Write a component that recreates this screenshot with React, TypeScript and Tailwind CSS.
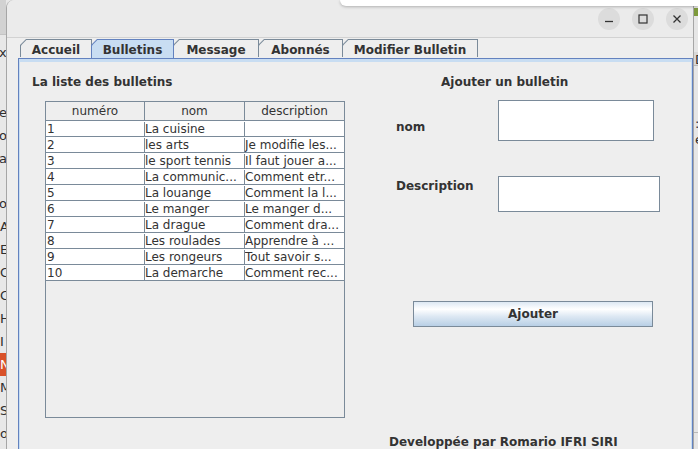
import clsx from "clsx";

const rows = [
  ["1", "La cuisine", ""],
  ["2", "les arts", "Je modifie les..."],
  ["3", "le sport tennis", "Il faut jouer a..."],
  ["4", "La communic...", "Comment etr..."],
  ["5", "La louange", "Comment la l..."],
  ["6", "Le manger", "Le manger d..."],
  ["7", "La drague", "Comment dra..."],
  ["8", "Les roulades", "Apprendre à ..."],
  ["9", "Les rongeurs", "Tout savoir s..."],
  ["10", "La demarche", "Comment rec..."],
];

const tabs = [
  { label: "Accueil", width: "w-[72px]" },
  { label: "Bulletins", width: "w-[83px]", selected: true },
  { label: "Message", width: "w-[86px]" },
  { label: "Abonnés", width: "w-[85px]" },
  { label: "Modifier Bulletin", width: "w-[136px]" },
];

const sideLetters = ["A", "E", "C", "C", "H", "I", "N", "M", "S", "o"];

const Tab = ({ label, width, selected }: { label: string; width: string; selected?: boolean }) => {
  return (
    <div
      className={clsx(
        width,
        "-ml-px first:ml-0 px-px pt-px [clip-path:polygon(6px_0,100%_0,100%_100%,0_100%,0_6px)]",
        selected ? "relative z-10 h-[19px] bg-[#6382bf]" : "h-[18px] bg-[#7a8a99]"
      )}
    >
      <div
        className={clsx(
          "flex h-[17px] items-center justify-center pt-[2px] text-[12px] font-bold text-[#333333] [clip-path:polygon(5.4px_0,100%_0,100%_100%,0_100%,0_5.4px)]",
          selected ? "h-[18px] bg-[#c8ddf2]" : "bg-[#eeeeee]"
        )}
      >
        {label}
      </div>
    </div>
  );
};

const App = () => {
  return (
    <div className="relative flex h-[449px] w-[698px] overflow-hidden bg-[#e8e8e8] font-['DejaVu_Sans',sans-serif] text-[#333333]">
      {/* desktop behind, left */}
      <div className="flex w-[6px] shrink-0 flex-col overflow-hidden text-[13px] leading-[23px] text-[#2e2e2e]">
        <div className="h-[35px] shrink-0 border-b border-[#c4c4c4] bg-[#d2d2d2]" />
        <div className="mt-[6px] -ml-[1px]">x</div>
        <div className="mt-[37px] -ml-[1px]">e</div>
        <div className="-ml-[1px]">o</div>
        <div className="-ml-[1px]">av</div>
        <div className="mt-[22px] -ml-[1px]">o</div>
        {sideLetters.map((l, i) => (
          <div key={i} className={clsx("-ml-[1px] pl-px", l === "N" && "bg-[#d9522a] text-white")}>
            {l}
          </div>
        ))}
      </div>

      {/* window */}
      <div className="flex w-[688px] shrink-0 flex-col rounded-tl-[8px] border-x border-[#a6a6a6] bg-[#eeeeee]">
        <div className="flex h-[38px] shrink-0 items-center justify-end gap-[12px] rounded-tl-[8px] border-b border-[#d2d2d2] bg-[#ebebeb] pr-[5px]">
          <div className="flex h-[22px] w-[22px] items-center justify-center rounded-full bg-[#dcdcdc]">
            <svg width="10" height="10" viewBox="0 0 10 10">
              <path d="M1 7.5h8" stroke="#333" strokeWidth="1.3" />
            </svg>
          </div>
          <div className="flex h-[22px] w-[22px] items-center justify-center rounded-full bg-[#dcdcdc]">
            <svg width="10" height="10" viewBox="0 0 10 10">
              <rect x="1" y="1" width="8" height="8" fill="none" stroke="#333" strokeWidth="1.2" />
            </svg>
          </div>
          <div className="flex h-[22px] w-[22px] items-center justify-center rounded-full bg-[#dcdcdc]">
            <svg width="10" height="10" viewBox="0 0 10 10">
              <path d="M1.5 1.5l7 7M8.5 1.5l-7 7" stroke="#333" strokeWidth="1.3" />
            </svg>
          </div>
        </div>

        <div className="flex flex-1 flex-col pl-[11px] pt-[1px]">
          <div className="ml-[2px] flex items-start">
            {tabs.map((t) => (
              <Tab key={t.label} {...t} />
            ))}
          </div>

          <div className="flex-1 border-x border-t border-[#6382bf] bg-[#eeeeee]">
            <div className="flex h-full border-x border-t-[3px] border-[#c8ddf2]">
              {/* liste */}
              <div className="flex w-[340px] shrink-0 flex-col pl-[12px] pt-[12px]">
                <p className="text-[12px] font-bold leading-[16px]">La liste des bulletins</p>
                <div className="ml-[13px] mt-[11px] flex h-[317px] w-[300px] flex-col border border-[#7a8a99] bg-[#eeeeee] text-[12px]">
                  <div className="flex h-[19px] shrink-0 border-b border-[#7a8a99] bg-[#eeeeee] leading-[18px]">
                    <div className="w-[99px] border-r border-[#7a8a99] text-center">numéro</div>
                    <div className="w-[100px] border-r border-[#7a8a99] text-center">nom</div>
                    <div className="flex-1 text-center">description</div>
                  </div>
                  {rows.map((r) => (
                    <div key={r[0]} className="flex h-[16px] shrink-0 border-b border-[#7a8a99] bg-white pt-px leading-[15px]">
                      <div className="w-[99px] overflow-hidden whitespace-nowrap border-r border-[#7a8a99] pl-px">{r[0]}</div>
                      <div className="w-[100px] overflow-hidden whitespace-nowrap border-r border-[#7a8a99]">{r[1]}</div>
                      <div className="flex-1 overflow-hidden whitespace-nowrap">{r[2]}</div>
                    </div>
                  ))}
                </div>
              </div>

              {/* ajout */}
              <div className="flex flex-1 flex-col pt-[12px] text-[12px] font-bold">
                <p className="ml-[81px] leading-[16px]">Ajouter un bulletin</p>
                <div className="mt-[10px] flex items-start">
                  <span className="ml-[36px] mt-[19px] w-[102px] leading-[16px]">nom</span>
                  <div className="h-[41px] w-[156px] border border-[#7a8a99] bg-white" />
                </div>
                <div className="mt-[35px] flex items-start">
                  <span className="ml-[36px] mt-[2px] w-[102px] leading-[16px]">Description</span>
                  <div className="h-[36px] w-[162px] border border-[#7a8a99] bg-white" />
                </div>
                <button className="ml-[53px] mt-[89px] flex h-[26px] w-[240px] items-center justify-center border border-[#7a8a99] bg-[linear-gradient(to_bottom,#dde8f3_0%,#ffffff_30%,#dde8f3_60%,#b8cfe5_100%)] font-bold text-[#333333]">
                  Ajouter
                </button>
                <p className="ml-[29px] mt-[107px] leading-[16px]">Developpée par Romario IFRI SIRI</p>
              </div>
            </div>
          </div>
        </div>
      </div>

      {/* desktop behind, right */}
      <div className="flex w-[4px] shrink-0 flex-col overflow-hidden bg-[#e6e6e6] text-[13px] leading-[16px] text-[#2e2e2e]">
        <div className="mt-[8px] h-[8px] w-[4px] bg-[#7e9a3c]" />
        <div className="mt-[36px] h-[14px] border-b border-[#b8b8b8] bg-[#d8d8d8] pl-px">D</div>
        <div className="mt-[50px] pl-px">:</div>
        <div className="pl-px">e</div>
        <div className="mb-[16px] mt-auto h-px bg-[#b8b8b8]" />
      </div>

      {/* popup edge over the top */}
      <div className="absolute left-[340px] right-0 top-0 z-20 h-[6px] rounded-bl-[10px] bg-white shadow-[0_1px_3px_rgba(0,0,0,0.25)]" />
    </div>
  );
};

export default App;
